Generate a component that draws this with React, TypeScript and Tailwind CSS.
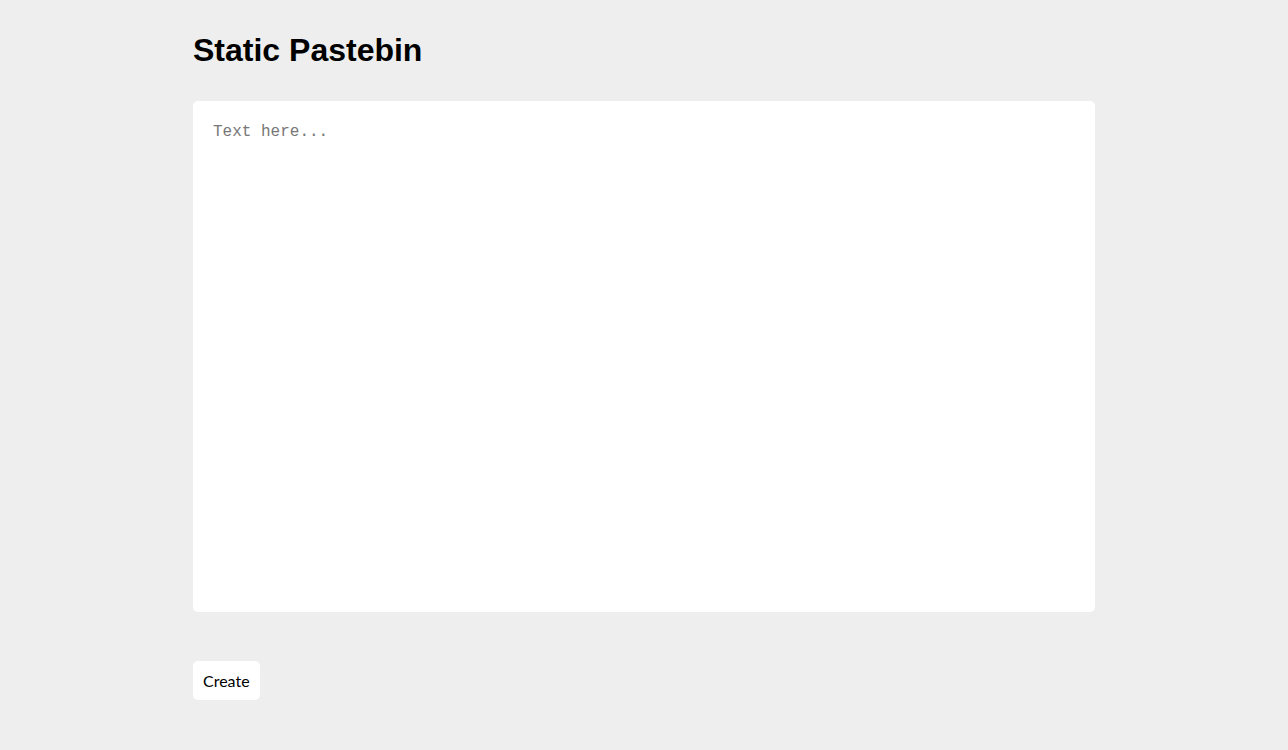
export default function App() {
  return (
    <div className="min-h-screen bg-[#eeeeee]">
      <div className="mx-auto flex w-[902px] flex-col items-start pt-[32px]">
        {/* Title */}
        <h1 className="font-['Liberation_Sans',Arial,sans-serif] text-[32px] leading-[37px] font-bold text-black">
          Static Pastebin
        </h1>

        {/* Paste area */}
        <textarea
          placeholder="Text here..."
          className="mt-[32px] block h-[511px] w-full resize-none rounded-[5px] bg-white px-5 pt-[22px] pb-5 font-['Liberation_Mono','Courier_New',monospace] text-[16px] leading-[19px] text-black outline-none placeholder:text-[#777777]"
        />

        {/* Actions */}
        <button className="mt-[49px] h-[39px] rounded-[5px] bg-white px-[10px] font-['Lato','Open_Sans',sans-serif] text-[16px] text-black">
          Create
        </button>
      </div>
    </div>
  );
}
